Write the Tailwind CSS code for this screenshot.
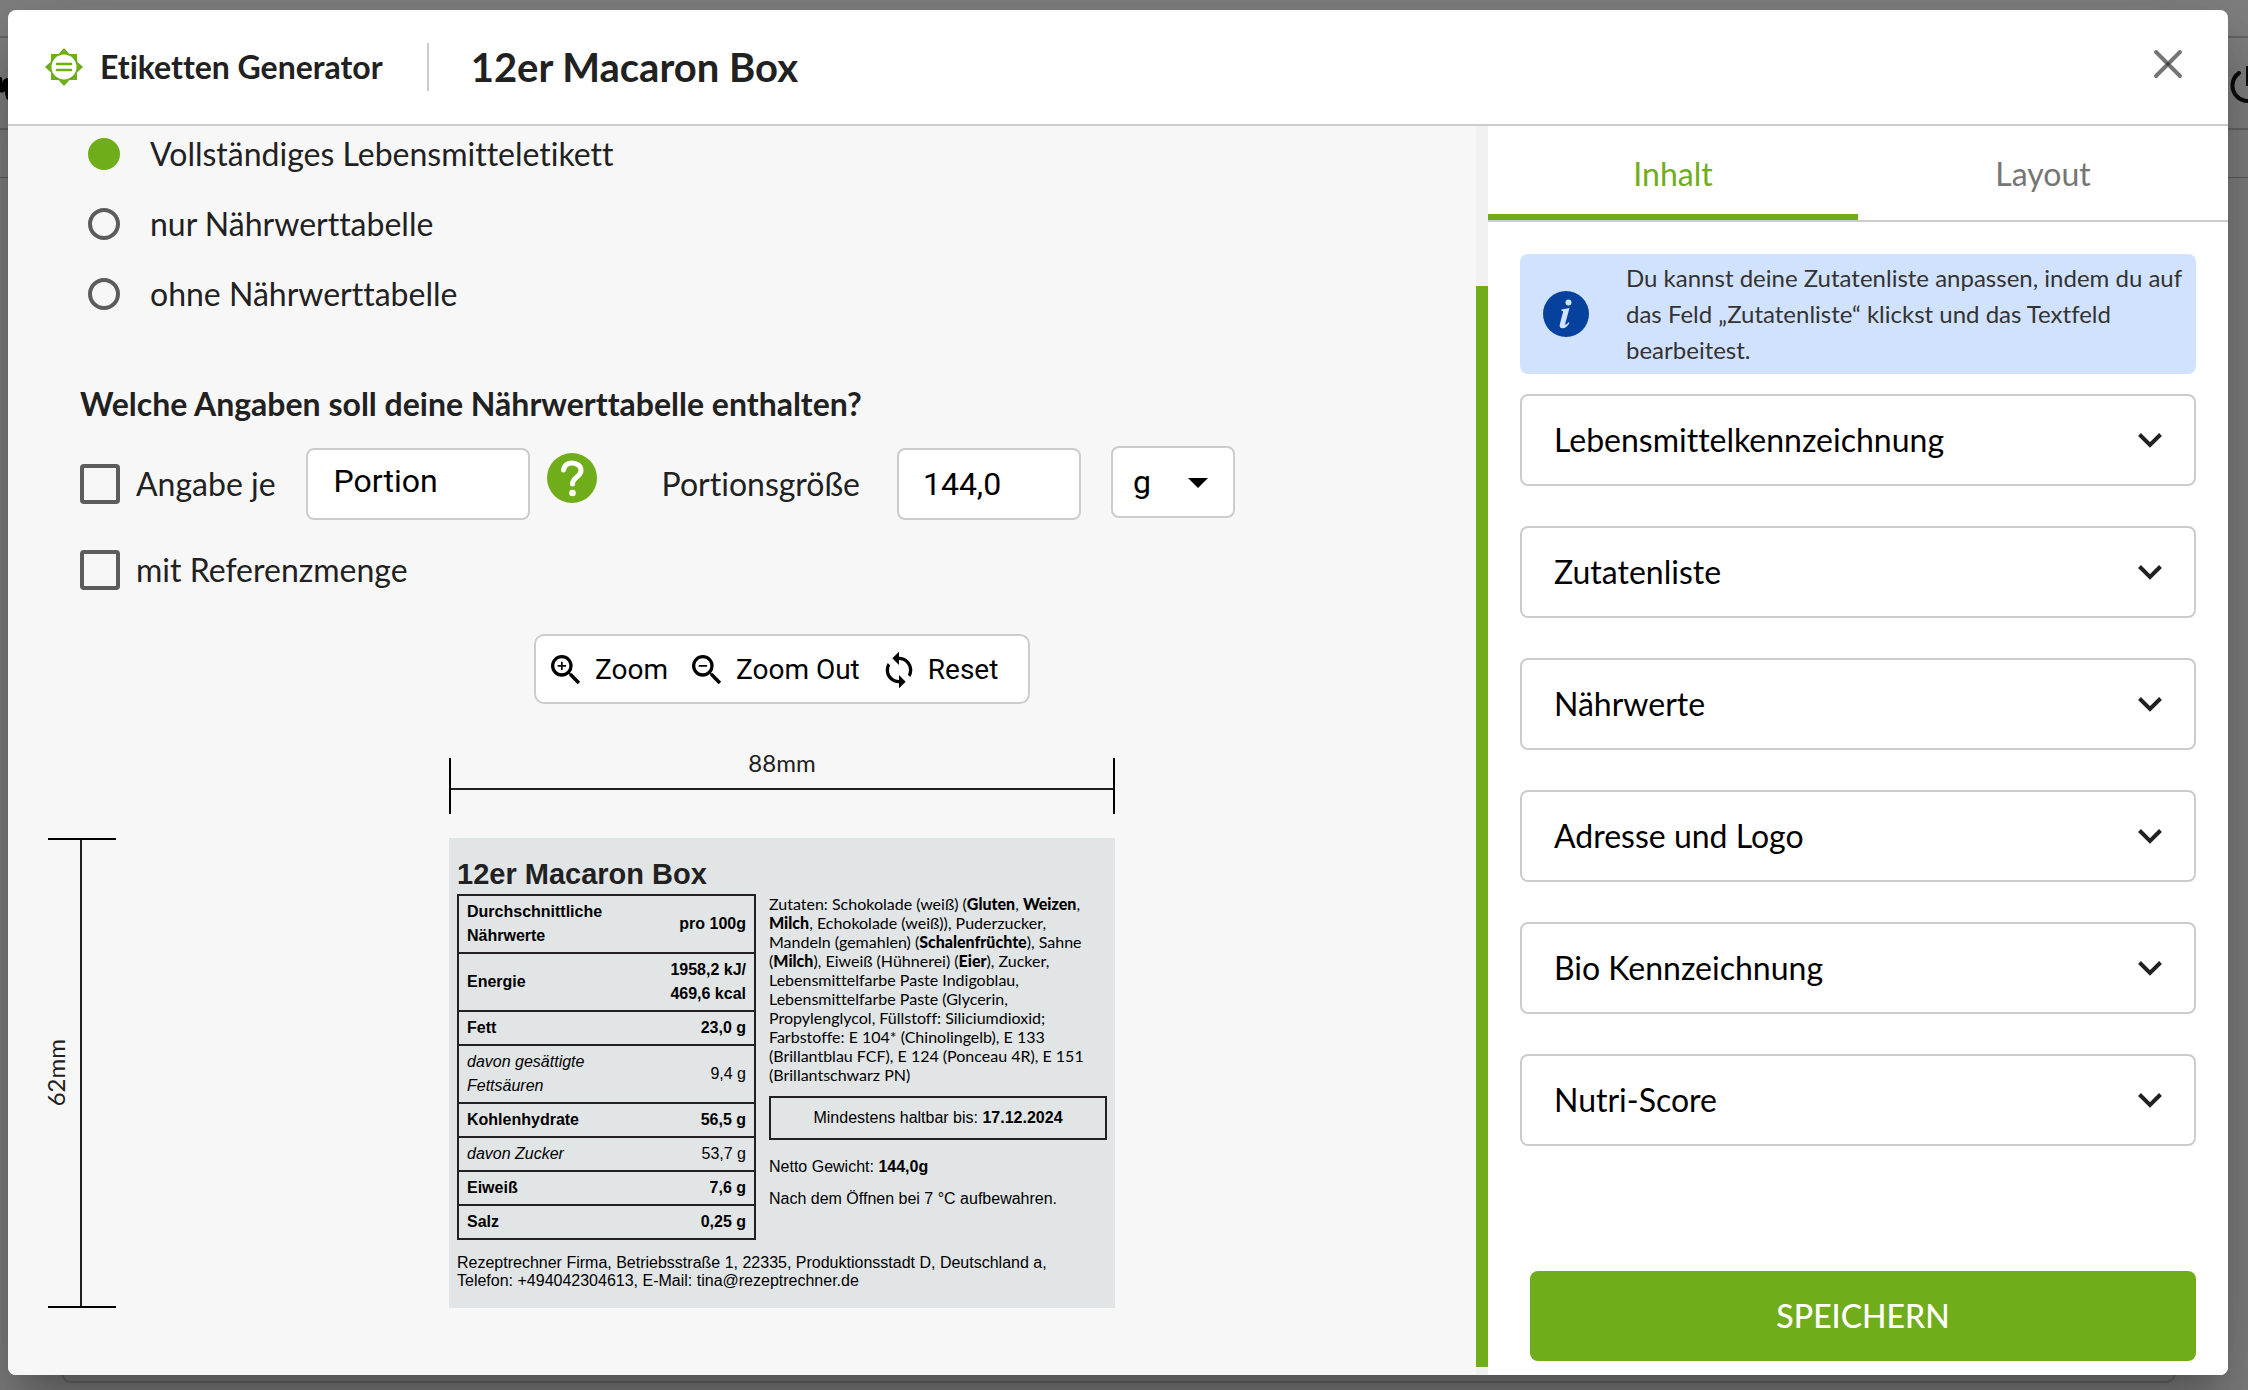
<!DOCTYPE html>
<html lang="de">
<head>
<meta charset="utf-8">
<title>Etiketten Generator</title>
<script src="https://cdn.jsdelivr.net/npm/@tailwindcss/browser@4"></script>
</head>
<body class="relative flex min-h-screen overflow-x-hidden bg-[#808080] pt-[10px] pr-5 pb-4 pl-2 font-['Lato',sans-serif] text-[32px] leading-10 text-[#212121] [font-variant-ligatures:none]">

<!-- Dimmed page behind the dialog -->
<div class="absolute inset-0 overflow-hidden" aria-hidden="true">
  <div class="absolute inset-x-0 top-9 h-[94px] border-y-2 border-[#666]"></div>
  <div class="absolute inset-x-0 top-[177px] h-px bg-[#5c5c5c]"></div>
  <div class="absolute right-[72px] bottom-2 left-[61px] h-40 rounded-[10px] border-2 border-[#6a6a6a]"></div>
  <svg class="absolute top-[74px] left-0 h-7 w-3" viewBox="0 0 12 28"><path d="M0 3c2 0 3 2 2 6 1-3 3-5 6-5v22c-2-1-3-5-3-9-2 2-3 2-5 1z" fill="#000"/></svg>
  <svg class="absolute top-[64px] -right-5 size-10" viewBox="0 0 40 40" fill="none" stroke="#0a0a0a" stroke-width="4"><path d="M11 9a15.500 15.500 0 1 0 18 0" stroke-linecap="round"/><path d="M20 2v20" /></svg>
</div>

<main role="dialog" aria-labelledby="dialog-title" class="relative flex flex-1 flex-col overflow-hidden rounded-lg bg-white shadow-[0_22px_30px_-14px_rgba(0,0,0,0.2),0_48px_76px_6px_rgba(0,0,0,0.14),0_18px_92px_16px_rgba(0,0,0,0.12)]">
  <header class="flex h-[116px] shrink-0 items-center border-b-2 border-[#ccc] pr-[42px] pl-9">
    <svg class="size-10" viewBox="0 0 40 40"><path fill="#70ad1b" d="M20 1l5.500 6H33v7.500l6 5.500-6 5.500V33h-7.500L20 39l-5.500-6H7v-7.500L1 20l6-5.500V7h7.500z"/><circle cx="20" cy="20" r="12.500" fill="#fff"/><path d="M13 17h14M13 23h14" stroke="#70ad1b" stroke-width="2.600" stroke-linecap="round"/></svg>
    <span class="ml-4 font-bold">Etiketten Generator</span>
    <span class="ml-11 h-12 w-0.5 bg-[#ccc]"></span>
    <h1 id="dialog-title" class="ml-[42px] text-[40px] font-bold">12er Macaron Box</h1>
    <button type="button" aria-label="Schließen" class="mb-1.5 ml-auto grid size-9 place-items-center">
      <svg class="size-9" viewBox="0 0 36 36" stroke="#757575" stroke-width="4" stroke-linecap="round"><path d="M6 6l24 24M30 6L6 30"/><circle cx="18" cy="18" r="1" stroke-width="2" stroke="#3f3f3f" fill="#3f3f3f"/></svg>
    </button>
  </header>

  <div class="flex flex-1">
    <section class="flex flex-1 bg-[#f7f7f7]">
      <div class="flex-1">
        <form class="pt-3 pl-[72px]">
          <fieldset class="flex flex-col gap-[38px]">
            <label class="flex h-8 items-center gap-[30px]"><input type="radio" name="art" checked class="ml-2 size-8 appearance-none rounded-full border-4 border-[#5c5c5c] checked:border-[#70ad1b] checked:bg-[#70ad1b]">Vollständiges Lebensmitteletikett</label>
            <label class="flex h-8 items-center gap-[30px]"><input type="radio" name="art" class="ml-2 size-8 appearance-none rounded-full border-4 border-[#5c5c5c] checked:border-[#70ad1b] checked:bg-[#70ad1b]">nur Nährwerttabelle</label>
            <label class="flex h-8 items-center gap-[30px]"><input type="radio" name="art" class="ml-2 size-8 appearance-none rounded-full border-4 border-[#5c5c5c] checked:border-[#70ad1b] checked:bg-[#70ad1b]">ohne Nährwerttabelle</label>
          </fieldset>
          <h2 class="mt-[74px] font-bold">Welche Angaben soll deine Nährwerttabelle enthalten?</h2>
          <div class="mt-6 flex h-[72px] items-center">
            <label class="flex items-center gap-4"><input type="checkbox" class="size-10 appearance-none rounded border-4 border-[#5c5c5c] checked:bg-[#70ad1b]">Angabe je</label>
            <input type="text" aria-label="Bezeichnung der Portion" value="Portion" class="ml-[30px] h-[72px] w-56 rounded-lg border-2 border-[#ccc] bg-white px-[26px] pb-1.5 font-['Roboto',sans-serif] text-[32px] text-black">
            <button type="button" aria-label="Hilfe" class="mb-3 ml-4 size-[52px]">
              <svg class="size-[52px]" viewBox="0 0 52 52"><circle cx="26" cy="26" r="25" fill="#70ad1b"/><path d="M17.500 18c1-5 4.500-7 8.500-7 5 0 9 3 9 7.500 0 6-8.500 7-8.500 13.500" fill="none" stroke="#fff" stroke-width="5" stroke-linecap="round"/><circle cx="26.500" cy="41" r="3.300" fill="#fff"/></svg>
            </button>
            <label for="groesse" class="ml-16">Portionsgröße</label>
            <input id="groesse" type="text" value="144,0" class="ml-[37px] h-[72px] w-[184px] rounded-lg border-2 border-[#ccc] bg-white px-6 font-['Roboto',sans-serif] text-[32px] text-black">
            <div class="relative mb-1 ml-[30px]">
              <select aria-label="Einheit" class="h-[72px] w-[124px] appearance-none rounded-lg border-2 border-[#ccc] bg-white pl-5 font-['Roboto',sans-serif] text-[32px] text-black"><option>g</option></select>
              <svg class="pointer-events-none absolute top-8 right-[27px] h-2.5 w-5" viewBox="0 0 20 10"><path d="M0 0h20L10 10z"/></svg>
            </div>
          </div>
          <label class="mt-[30px] flex items-center gap-4"><input type="checkbox" class="size-10 appearance-none rounded border-4 border-[#5c5c5c] checked:bg-[#70ad1b]">mit Referenzmenge</label>
        </form>

        <div class="mt-11 grid grid-cols-[68px_1fr] pr-7 pb-[67px] pl-10">
          <div class="col-start-2 flex flex-col items-center">
            <div class="flex h-[70px] w-[496px] items-center gap-6 rounded-[10px] border-2 border-[#ccc] bg-white pt-0.5 pl-[15px] font-['Roboto',sans-serif] text-[28px] text-black">
              <button type="button" class="flex items-center gap-3.5"><svg class="h-10 w-[30px]" viewBox="3 0 18 24"><path d="M15.500 14h-.79l-.28-.27A6.471 6.471 0 0 0 16 9.500 6.500 6.500 0 1 0 9.500 16c1.610 0 3.090-.59 4.230-1.570l.27.28v.79l5 4.990L20.490 19l-4.990-5zm-6 0C7.010 14 5 11.990 5 9.500S7.010 5 9.500 5 14 7.010 14 9.500 11.990 14 9.500 14zM12 10h-2v2H9v-2H7V9h2V7h1v2h2z"/></svg>Zoom</button>
              <button type="button" class="flex items-center gap-3.5"><svg class="h-10 w-[30px]" viewBox="3 0 18 24"><path d="M15.500 14h-.79l-.28-.27A6.471 6.471 0 0 0 16 9.500 6.500 6.500 0 1 0 9.500 16c1.610 0 3.090-.59 4.230-1.570l.27.28v.79l5 4.990L20.490 19l-4.990-5zm-6 0C7.010 14 5 11.990 5 9.500S7.010 5 9.500 5 14 7.010 14 9.500 11.990 14 9.500 14zM7 9h5v1H7z"/></svg>Zoom Out</button>
              <button type="button" class="flex items-center gap-3.5"><svg class="h-10 w-[30px]" viewBox="3 0 18 24"><path d="M12 4V1L8 5l4 4V6c3.310 0 6 2.690 6 6 0 1.010-.25 1.970-.7 2.800l1.460 1.460A7.930 7.930 0 0 0 20 12c0-4.420-3.580-8-8-8zm0 14c-3.310 0-6-2.690-6-6 0-1.010.25-1.970.7-2.800L5.240 7.740A7.930 7.930 0 0 0 4 12c0 4.420 3.580 8 8 8v3l4-4-4-4v3z"/></svg>Reset</button>
            </div>
            <div class="mt-11 flex w-[666px] flex-col items-center">
              <span class="h-[10px] text-2xl leading-[30px]">88mm</span>
              <div class="flex h-14 w-full items-center border-x-2 border-black pt-1.5"><span class="h-0.5 w-full bg-[#212121]"></span></div>
            </div>
          </div>

          <div class="mt-6 flex items-stretch">
            <div class="flex w-4 items-center justify-center"><span class="rotate-180 text-2xl leading-4 [writing-mode:vertical-rl]">62mm</span></div>
            <div class="-ml-4 flex w-[68px] justify-center border-y-2 border-black"><span class="mr-0.5 w-0.5 bg-[#212121]"></span></div>
          </div>

          <article class="mx-auto mt-6 w-[666px] bg-[#e1e5e6] px-2 pt-5 pb-[18px] font-['Liberation_Sans',Arial,sans-serif] text-base leading-[18px] text-black">
            <h3 class="text-[29px] leading-8 font-bold text-[#212121]">12er Macaron Box</h3>
            <div class="mt-1 flex gap-[13px]">
              <table class="w-[299px] shrink-0 border-collapse border-2 border-[#212121] leading-6 [&_td]:border-y-2 [&_td]:border-[#212121] [&_td]:px-2 [&_td]:py-1 [&_td+td]:text-right [&_th]:px-2 [&_th]:py-1 [&_th]:text-left [&_th+th]:text-right">
                <tr class="font-bold"><th class="w-[170px]">Durchschnittliche Nährwerte</th><th>pro 100g</th></tr>
                <tr class="font-bold"><td>Energie</td><td>1958,2 kJ/<br>469,6 kcal</td></tr>
                <tr class="font-bold"><td>Fett</td><td>23,0 g</td></tr>
                <tr><td class="italic">davon gesättigte Fettsäuren</td><td>9,4 g</td></tr>
                <tr class="font-bold"><td>Kohlenhydrate</td><td>56,5 g</td></tr>
                <tr><td class="italic">davon Zucker</td><td>53,7 g</td></tr>
                <tr class="font-bold"><td>Eiweiß</td><td>7,6 g</td></tr>
                <tr class="font-bold"><td>Salz</td><td>0,25 g</td></tr>
              </table>
              <div class="flex-1">
                <p class="font-['Lato',sans-serif] leading-[19px]">Zutaten: Schokolade (weiß) (<b class="font-black">Gluten</b>, <b class="font-black">Weizen</b>, <b class="font-black">Milch</b>, Echokolade (weiß)), Puderzucker, Mandeln (gemahlen) (<b class="font-black">Schalenfrüchte</b>), Sahne (<b class="font-black">Milch</b>), Eiweiß (Hühnerei) (<b class="font-black">Eier</b>), Zucker, Lebensmittelfarbe Paste Indigoblau, Lebensmittelfarbe Paste (Glycerin, Propylenglycol, Füllstoff: Siliciumdioxid; Farbstoffe: E 104* (Chinolingelb), E 133 (Brillantblau FCF), E 124 (Ponceau 4R), E 151 (Brillantschwarz PN)</p>
                <p class="mt-3 flex h-11 items-center justify-center border-2 border-[#212121]"><span>Mindestens haltbar bis: <b>17.12.2024</b></span></p>
                <p class="mt-[18px]">Netto Gewicht: <b>144,0g</b></p>
                <p class="mt-3.5">Nach dem Öffnen bei 7 °C aufbewahren.</p>
              </div>
            </div>
            <p class="mt-3.5">Rezeptrechner Firma, Betriebsstraße 1, 22335, Produktionsstadt D, Deutschland a,<br>Telefon: +494042304613, E-Mail: tina@rezeptrechner.de</p>
          </article>
        </div>
      </div>
      <div class="flex w-3 flex-col bg-[#f1f1f1] pt-40 pb-2"><span class="flex-1 bg-[#70ad1b]"></span></div>
    </section>

    <aside class="flex w-1/3 flex-col bg-white">
      <nav class="flex h-24 border-b-2 border-[#ccc]">
        <button type="button" class="flex-1 border-b-6 border-[#70ad1b] pt-2 text-[#70ad1b]">Inhalt</button>
        <button type="button" class="flex-1 border-b-6 border-transparent pt-2 text-[#757575]">Layout</button>
      </nav>
      <div class="flex flex-1 flex-col px-8 pt-8 pb-3.5 text-black">
        <div class="flex h-[120px] items-center rounded-lg bg-[#d1e2ff] pl-[23px] text-2xl leading-9 text-[#333]">
          <svg class="size-[46px] shrink-0" viewBox="0 0 46 46"><circle cx="23" cy="23" r="23" fill="#06419d"/><circle cx="25.500" cy="11.500" r="3" fill="#d1e2ff"/><path d="M18.500 18.500l8-1.500-4.200 15.500c-.4 1.500.6 1.500 1.500.6l1.700-1.900 1 .8c-2 3.500-4.500 5.300-7 5.300-2.300 0-3.300-1.600-2.700-4l3.200-12c.3-1.200-.2-1.500-1.700-1.600z" fill="#d1e2ff"/></svg>
          <p class="ml-[37px]">Du kannst deine Zutatenliste anpassen, indem du auf das Feld „Zutatenliste“ klickst und das Textfeld bearbeitest.</p>
        </div>
        <div class="mt-5 flex flex-col gap-10">
          <button type="button" class="flex h-[92px] items-center justify-between rounded-lg border-2 border-[#ccc] pr-[30px] pl-8">Lebensmittelkennzeichnung<svg class="size-7" viewBox="0 0 28 28" fill="none" stroke="#212121" stroke-width="4"><path d="M3.500 8.500L14 19 24.500 8.500"/></svg></button>
          <button type="button" class="flex h-[92px] items-center justify-between rounded-lg border-2 border-[#ccc] pr-[30px] pl-8">Zutatenliste<svg class="size-7" viewBox="0 0 28 28" fill="none" stroke="#212121" stroke-width="4"><path d="M3.500 8.500L14 19 24.500 8.500"/></svg></button>
          <button type="button" class="flex h-[92px] items-center justify-between rounded-lg border-2 border-[#ccc] pr-[30px] pl-8">Nährwerte<svg class="size-7" viewBox="0 0 28 28" fill="none" stroke="#212121" stroke-width="4"><path d="M3.500 8.500L14 19 24.500 8.500"/></svg></button>
          <button type="button" class="flex h-[92px] items-center justify-between rounded-lg border-2 border-[#ccc] pr-[30px] pl-8">Adresse und Logo<svg class="size-7" viewBox="0 0 28 28" fill="none" stroke="#212121" stroke-width="4"><path d="M3.500 8.500L14 19 24.500 8.500"/></svg></button>
          <button type="button" class="flex h-[92px] items-center justify-between rounded-lg border-2 border-[#ccc] pr-[30px] pl-8">Bio Kennzeichnung<svg class="size-7" viewBox="0 0 28 28" fill="none" stroke="#212121" stroke-width="4"><path d="M3.500 8.500L14 19 24.500 8.500"/></svg></button>
          <button type="button" class="flex h-[92px] items-center justify-between rounded-lg border-2 border-[#ccc] pr-[30px] pl-8">Nutri-Score<svg class="size-7" viewBox="0 0 28 28" fill="none" stroke="#212121" stroke-width="4"><path d="M3.500 8.500L14 19 24.500 8.500"/></svg></button>
        </div>
        <button type="submit" class="mt-auto ml-2.5 h-[90px] rounded-lg bg-[#70ad1b] font-medium text-white">SPEICHERN</button>
      </div>
    </aside>
  </div>
</main>
</body>
</html>
